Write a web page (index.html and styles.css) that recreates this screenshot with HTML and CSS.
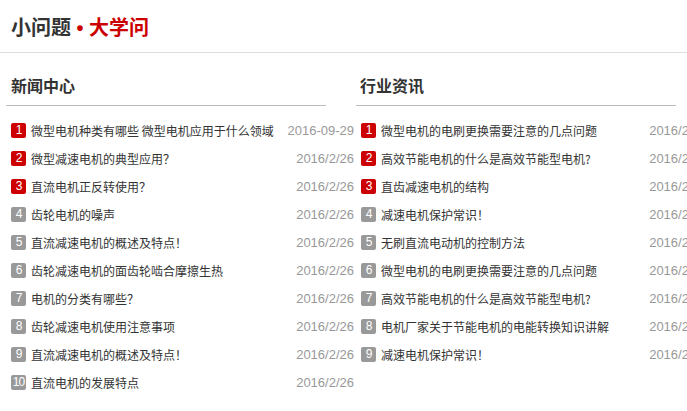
FILE: index.html
```html
<!DOCTYPE html>
<html lang="zh-CN">
<head>
    <meta charset="UTF-8">
    <meta name="viewport" content="width=device-width, initial-scale=1.0">
    <title>小问题 • 大学问</title>
    <link rel="stylesheet" href="styles.css">
</head>
<body>
    <header class="top">
        <h1 class="brand">小问题 <span class="accent">• 大学问</span></h1>
    </header>

    <main class="columns">
        <!-- 新闻中心 -->
        <section class="panel">
            <h2 class="panel-title">新闻中心</h2>
            <ul class="rank-list">
                <li class="rank-item"><span class="rank hot">1</span><a class="rank-link" href="#">微型电机种类有哪些 微型电机应用于什么领域</a><span class="rank-date">2016-09-29</span></li>
                <li class="rank-item"><span class="rank hot">2</span><a class="rank-link" href="#">微型减速电机的典型应用？</a><span class="rank-date">2016/2/26</span></li>
                <li class="rank-item"><span class="rank hot">3</span><a class="rank-link" href="#">直流电机正反转使用？</a><span class="rank-date">2016/2/26</span></li>
                <li class="rank-item"><span class="rank">4</span><a class="rank-link" href="#">齿轮电机的噪声</a><span class="rank-date">2016/2/26</span></li>
                <li class="rank-item"><span class="rank">5</span><a class="rank-link" href="#">直流减速电机的概述及特点！</a><span class="rank-date">2016/2/26</span></li>
                <li class="rank-item"><span class="rank">6</span><a class="rank-link" href="#">齿轮减速电机的面齿轮啮合摩擦生热</a><span class="rank-date">2016/2/26</span></li>
                <li class="rank-item"><span class="rank">7</span><a class="rank-link" href="#">电机的分类有哪些？</a><span class="rank-date">2016/2/26</span></li>
                <li class="rank-item"><span class="rank">8</span><a class="rank-link" href="#">齿轮减速电机使用注意事项</a><span class="rank-date">2016/2/26</span></li>
                <li class="rank-item"><span class="rank">9</span><a class="rank-link" href="#">直流减速电机的概述及特点！</a><span class="rank-date">2016/2/26</span></li>
                <li class="rank-item"><span class="rank">10</span><a class="rank-link" href="#">直流电机的发展特点</a><span class="rank-date">2016/2/26</span></li>
            </ul>
        </section>

        <!-- 行业资讯 -->
        <section class="panel">
            <h2 class="panel-title">行业资讯</h2>
            <ul class="rank-list rank-list-wide">
                <li class="rank-item"><span class="rank hot">1</span><a class="rank-link" href="#">微型电机的电刷更换需要注意的几点问题</a><span class="rank-date">2016/2/26</span></li>
                <li class="rank-item"><span class="rank hot">2</span><a class="rank-link" href="#">高效节能电机的什么是高效节能型电机?</a><span class="rank-date">2016/2/26</span></li>
                <li class="rank-item"><span class="rank hot">3</span><a class="rank-link" href="#">直齿减速电机的结构</a><span class="rank-date">2016/2/26</span></li>
                <li class="rank-item"><span class="rank">4</span><a class="rank-link" href="#">减速电机保护常识！</a><span class="rank-date">2016/2/26</span></li>
                <li class="rank-item"><span class="rank">5</span><a class="rank-link" href="#">无刷直流电动机的控制方法</a><span class="rank-date">2016/2/26</span></li>
                <li class="rank-item"><span class="rank">6</span><a class="rank-link" href="#">微型电机的电刷更换需要注意的几点问题</a><span class="rank-date">2016/2/26</span></li>
                <li class="rank-item"><span class="rank">7</span><a class="rank-link" href="#">高效节能电机的什么是高效节能型电机?</a><span class="rank-date">2016/2/26</span></li>
                <li class="rank-item"><span class="rank">8</span><a class="rank-link" href="#">电机厂家关于节能电机的电能转换知识讲解</a><span class="rank-date">2016/2/26</span></li>
                <li class="rank-item"><span class="rank">9</span><a class="rank-link" href="#">减速电机保护常识！</a><span class="rank-date">2016/2/26</span></li>
            </ul>
        </section>
    </main>
</body>
</html>
```

FILE: styles.css
```css
html, body {
    overflow: hidden;
}

body {
    margin: 0;
    padding: 0;
    background-color: #fff;
    color: #333;
    font-family: "Liberation Sans", "Noto Sans CJK SC", sans-serif;
}

.top {
    height: 52px;
    border-bottom: 1px solid #ddd;
    display: flex;
    align-items: center;
    padding-left: 11px;
}

.brand {
    margin: 4px 0 0;
    font-size: 20px;
    line-height: 24px;
    font-weight: bold;
    color: #333;
}

.brand .accent {
    color: #c00;
}

.columns {
    display: flex;
    padding-left: 6px;
}

.panel {
    flex: 0 0 350px;
    width: 350px;
}

.panel-title {
    width: 320px;
    box-sizing: border-box;
    margin: 18px 0 0;
    padding: 0 0 2px 5px;
    font-size: 16px;
    line-height: 32px;
    font-weight: bold;
    color: #333;
    border-bottom: 1px solid #bbb;
}

.panel + .panel .panel-title {
    padding-left: 4px;
}

.rank-list {
    list-style: none;
    margin: 10px 0 0 5px;
    padding: 0;
    width: 343px;
}

.rank-list-wide {
    width: 346px;
}

.rank-item {
    display: flex;
    align-items: center;
    height: 28px;
    white-space: nowrap;
}

.rank {
    flex: 0 0 15px;
    height: 15px;
    margin-right: 5px;
    border-radius: 2px;
    background-color: #999;
    color: #fff;
    font-size: 12px;
    line-height: 15px;
    text-align: center;
    letter-spacing: -1px;
}

.rank.hot {
    background-color: #c00;
}

.rank-link {
    flex: 1;
    color: #333;
    font-size: 12px;
    text-decoration: none;
    font-family: "Noto Sans CJK SC", sans-serif;
}

.rank-date {
    color: #999;
    font-size: 13px;
}
```
